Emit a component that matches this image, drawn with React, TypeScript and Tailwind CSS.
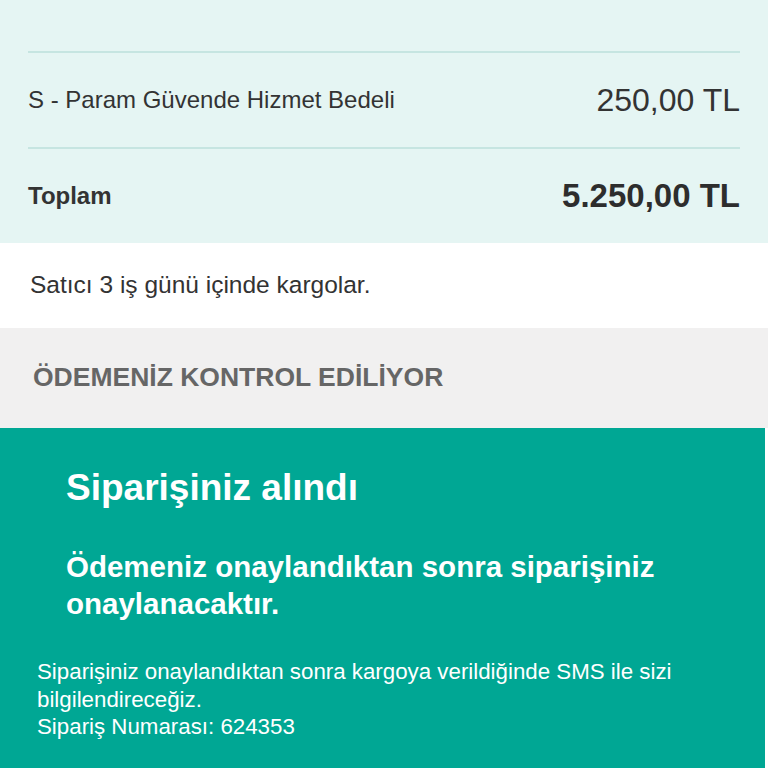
import React from "react";

export default function App() {
  const font = { fontFamily: '"Liberation Sans", Arial, sans-serif' };
  return (
    <div className="w-[768px] h-[768px] overflow-hidden bg-white" style={font}>
      <div className="bg-[#e5f5f3] h-[243px] px-[28px] pt-[51px] flex flex-col">
        <div className="h-[2px] bg-[#c6e5e1]" />
        <div className="h-[94px] flex items-center justify-between">
          <span className="text-[24px] text-[#333]">S - Param Güvende Hizmet Bedeli</span>
          <span className="text-[32px] text-[#333]">250,00 TL</span>
        </div>
        <div className="h-[2px] bg-[#c6e5e1]" />
        <div className="h-[94px] flex items-center justify-between">
          <span className="text-[24px] font-bold text-[#333]">Toplam</span>
          <span className="text-[33px] font-bold text-[#2d2d2d]">5.250,00 TL</span>
        </div>
      </div>
      <div className="h-[85px] flex items-center px-[30px]">
        <span className="text-[24.5px] text-[#333]">Satıcı 3 iş günü içinde kargolar.</span>
      </div>
      <div className="h-[100px] bg-[#f1f0f0] flex items-center px-[33px]">
        <span className="text-[26.5px] font-bold text-[#666]">ÖDEMENİZ KONTROL EDİLİYOR</span>
      </div>
      <div className="w-[765px] h-[340px] bg-[#00a794] text-white pt-[40px]">
        <div className="pl-[66px] text-[37px] font-bold leading-[40px]">Siparişiniz alındı</div>
        <div className="pl-[66px] mt-[39.5px] text-[29.5px] font-bold leading-[37px]">
          Ödemeniz onaylandıktan sonra siparişiniz<br />onaylanacaktır.
        </div>
        <div className="pl-[37px] mt-[36.75px] text-[22.3px] leading-[27.5px]">
          Siparişiniz onaylandıktan sonra kargoya verildiğinde SMS ile sizi<br />bilgilendireceğiz.<br />Sipariş Numarası: 624353
        </div>
      </div>
    </div>
  );
}
